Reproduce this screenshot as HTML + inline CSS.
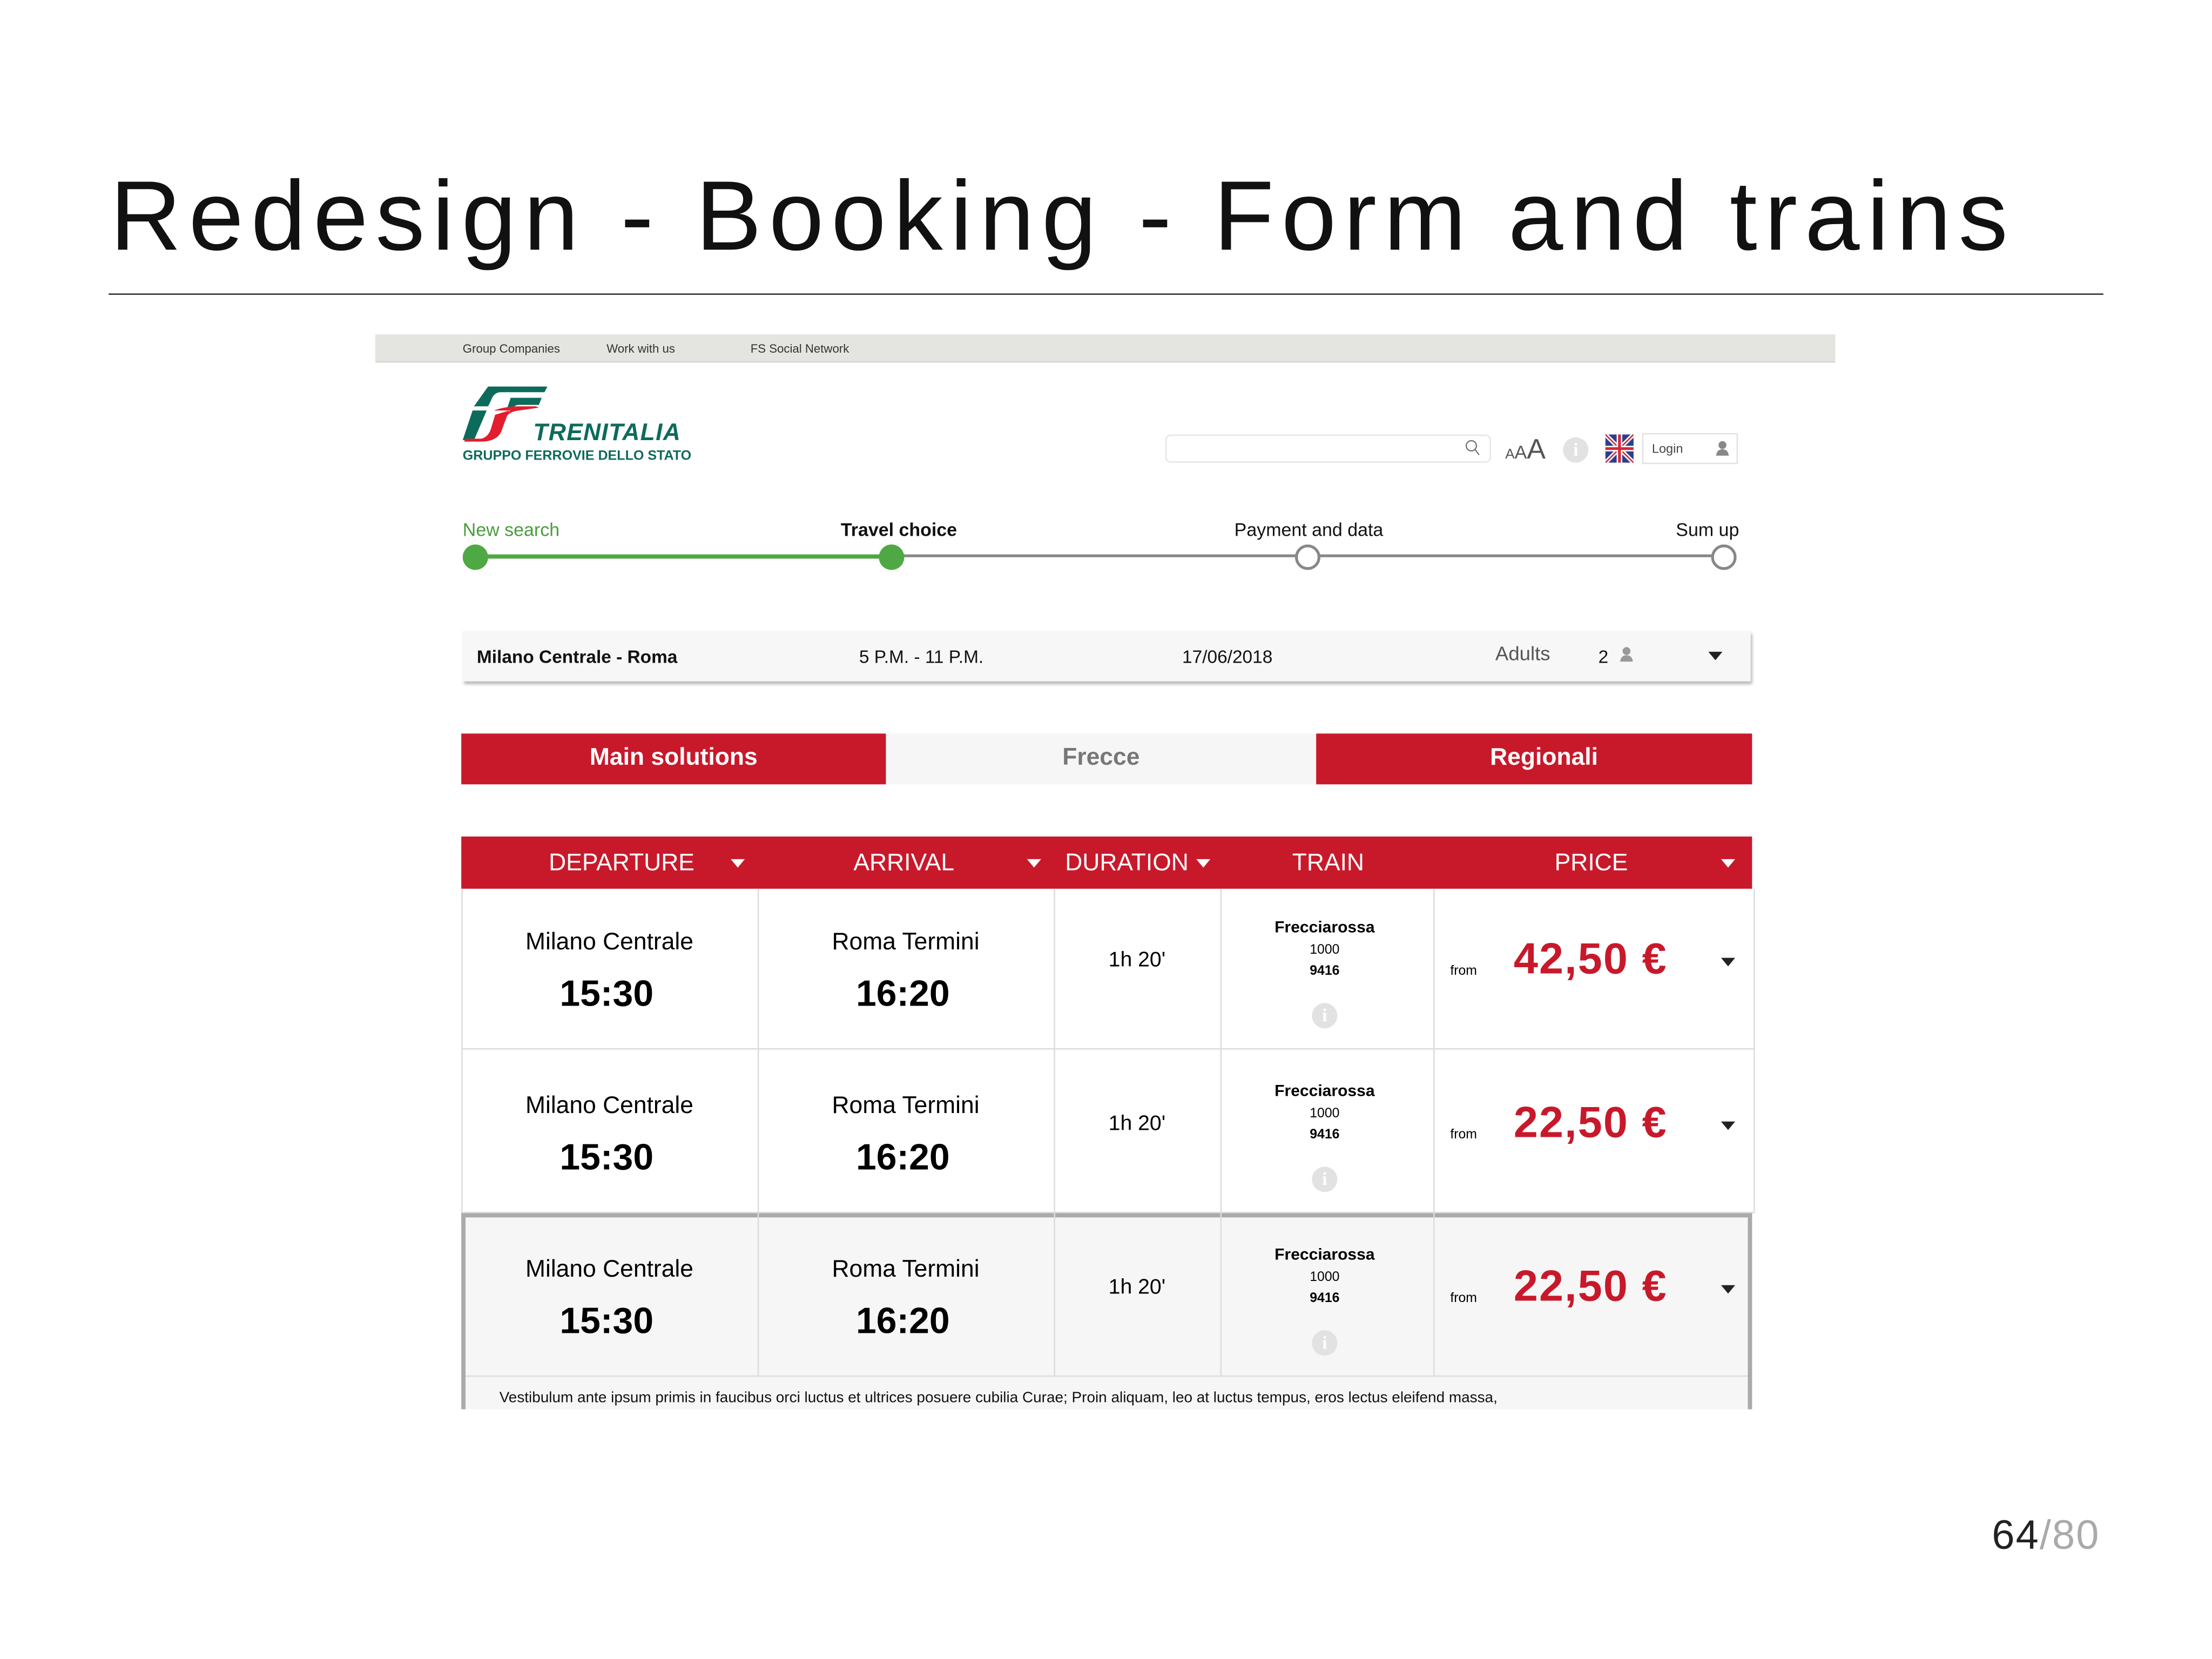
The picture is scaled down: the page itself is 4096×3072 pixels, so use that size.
<!DOCTYPE html>
<html><head><meta charset="utf-8"><style>
html,body{margin:0;padding:0;background:#fff;}
body{width:4096px;height:3072px;overflow:hidden;position:relative;font-family:"Liberation Sans",Arial,sans-serif;}
#s{position:absolute;left:0;top:0;width:1568px;height:1176px;transform:scale(2.6122);transform-origin:0 0;}
.a{position:absolute;white-space:nowrap;}
.red{background:#c8192b;}
.row{position:absolute;left:327px;width:915px;border-bottom:1px solid #ddd;}
.st{font-size:17px;position:absolute;width:210px;text-align:center;}
.tm{font-size:26px;font-weight:bold;position:absolute;width:210px;text-align:center;}
.tri{position:absolute;width:0;height:0;border-left:5px solid transparent;border-right:5px solid transparent;border-top:6px solid #222;}
.wt{border-top-color:#fff;}
.info{position:absolute;width:18px;height:18px;border-radius:50%;background:#e2e2e2;color:#fff;font-size:13px;font-weight:bold;text-align:center;line-height:18px;font-family:"Liberation Serif",serif;}
.pr{position:absolute;left:1073px;top:31px;font-size:31px;letter-spacing:0.8px;font-weight:bold;color:#c8192b;}
</style></head><body><div id="s">
<div class="a" style="left:78px;top:113px;font-size:70px;letter-spacing:5.2px;color:#111;">Redesign - Booking - Form and trains</div>
<div class="a" style="left:77px;top:208px;width:1414px;height:1px;background:#333;"></div>

<div class="a" style="left:266px;top:237px;width:1035px;height:19px;background:#e4e4e1;border-bottom:1px solid #d6d6d3;"></div>
<div class="a" style="left:328px;top:242px;font-size:8.5px;color:#333;">Group Companies</div>
<div class="a" style="left:430px;top:242px;font-size:8.5px;color:#333;">Work with us</div>
<div class="a" style="left:532px;top:242px;font-size:8.5px;color:#333;">FS Social Network</div>

<svg class="a" style="left:328px;top:272px" width="62" height="42" viewBox="0 0 62 42">
<path d="M18 2 L60 2 L58 6 L27 6 Q22 6 20 12 L18 16 L8 16 Z" fill="#0d6b5b"/>
<path d="M34 10 L56 10 L54 15 L40 15 Q36 15 35 19 L31 19 Z" fill="#0d6b5b"/>
<path d="M7 19 L17 19 L8 40 L0 40 Z" fill="#0d6b5b"/>
<path d="M22 19 L34 19 L28 22 Q24 26 22 32 Q20 38 14 39 L2 40 L1 41 L15 41 Q26 40 28 32 L31 24 Q32 20 40 19 L54 17 L52 16 L40 16 Q30 16 22 19 Z" fill="#e11d2e"/>
<path d="M23 22 L33 19 Q30 22 28 28 L25 36 Q22 41 14 41 L1 41 L2 39 L13 39 Q18 38 20 32 Z" fill="#e11d2e"/>
</svg>
<div class="a" style="left:378px;top:297px;font-size:17px;font-weight:bold;font-style:italic;color:#0d6b5b;letter-spacing:0.5px;">TRENITALIA</div>
<div class="a" style="left:328px;top:318px;font-size:9.6px;font-weight:bold;color:#0d6b5b;">GRUPPO FERROVIE DELLO STATO</div>

<div class="a" style="left:826px;top:308px;width:229px;height:18px;border:1px solid #e6e6e6;border-radius:4px;"></div>
<svg class="a" style="left:1038px;top:311px" width="12" height="13" viewBox="0 0 12 13"><circle cx="5" cy="5" r="3.6" fill="none" stroke="#666" stroke-width="0.8"/><path d="M7.6 7.6 L10.5 11.5" stroke="#666" stroke-width="0.8"/></svg>
<div class="a" style="left:1067px;top:308px;color:#555;"><span style="font-size:10px">A</span><span style="font-size:13px">A</span><span style="font-size:20px">A</span></div>
<div class="info" style="left:1108px;top:310px;">i</div>
<svg class="a" style="left:1138px;top:308px" width="20" height="20" viewBox="0 0 20 20"><rect width="20" height="20" fill="#2b3f8f"/><path d="M0 0L20 20M20 0L0 20" stroke="#fff" stroke-width="3"/><path d="M0 0L20 20M20 0L0 20" stroke="#d62839" stroke-width="1"/><path d="M10 0V20M0 10H20" stroke="#fff" stroke-width="4"/><path d="M10 0V20M0 10H20" stroke="#d62839" stroke-width="2"/></svg>
<div class="a" style="left:1164px;top:307px;width:66px;height:20px;border:1px solid #e2e2e2;"></div>
<div class="a" style="left:1171px;top:313px;font-size:9px;color:#444;">Login</div>
<svg class="a" style="left:1216px;top:312px" width="10" height="12" viewBox="0 0 10 12"><circle cx="5" cy="3.5" r="2.8" fill="#888"/><path d="M0.5 11 Q1 6.5 5 6.5 Q9 6.5 9.5 11Z" fill="#888"/></svg>

<div class="a" style="left:328px;top:368px;font-size:13px;color:#4a9d3c;">New search</div>
<div class="a" style="left:596px;top:368px;font-size:13px;font-weight:bold;color:#111;">Travel choice</div>
<div class="a" style="left:875px;top:368px;font-size:13px;color:#111;">Payment and data</div>
<div class="a" style="left:1188px;top:368px;font-size:13px;color:#111;">Sum up</div>
<div class="a" style="left:337px;top:393px;width:295px;height:3px;background:#4ea843;"></div>
<div class="a" style="left:632px;top:393px;width:590px;height:2px;background:#888;"></div>
<div class="a" style="left:328px;top:386px;width:18px;height:18px;border-radius:50%;background:#4ea843;"></div>
<div class="a" style="left:623px;top:386px;width:18px;height:18px;border-radius:50%;background:#4ea843;"></div>
<div class="a" style="left:918px;top:386px;width:14px;height:14px;border-radius:50%;background:#fff;border:2.5px solid #888;"></div>
<div class="a" style="left:1213px;top:386px;width:14px;height:14px;border-radius:50%;background:#fff;border:2.5px solid #888;"></div>

<div class="a" style="left:328px;top:447px;width:913px;height:36px;background:#f7f7f7;box-shadow:1px 2px 2px #bbb;"></div>
<div class="a" style="left:338px;top:458px;font-size:12.8px;font-weight:bold;color:#111;">Milano Centrale - Roma</div>
<div class="a" style="left:609px;top:458px;font-size:12.8px;color:#111;">5 P.M. - 11 P.M.</div>
<div class="a" style="left:838px;top:458px;font-size:12.8px;color:#111;">17/06/2018</div>
<div class="a" style="left:1060px;top:455px;font-size:14px;color:#555;">Adults</div>
<div class="a" style="left:1133px;top:458px;font-size:12.8px;color:#111;">2</div>
<svg class="a" style="left:1148px;top:458px" width="10" height="12" viewBox="0 0 10 12"><circle cx="5" cy="3.5" r="2.8" fill="#999"/><path d="M0.5 11 Q1 6.5 5 6.5 Q9 6.5 9.5 11Z" fill="#999"/></svg>
<div class="tri" style="left:1211px;top:462px;"></div>

<div class="a red" style="left:327px;top:520px;width:301px;height:36px;"></div>
<div class="a" style="left:628px;top:520px;width:305px;height:36px;background:#f6f6f6;"></div>
<div class="a red" style="left:933px;top:520px;width:309px;height:36px;"></div>
<div class="a" style="left:327px;top:527px;width:301px;text-align:center;font-size:17px;font-weight:bold;color:#fff;">Main solutions</div>
<div class="a" style="left:628px;top:527px;width:305px;text-align:center;font-size:17px;font-weight:bold;color:#777;">Frecce</div>
<div class="a" style="left:947px;top:527px;width:295px;text-align:center;font-size:17px;font-weight:bold;color:#fff;">Regionali</div>

<div class="a red" style="left:327px;top:593px;width:915px;height:37px;"></div>
<div class="a" style="left:389px;top:602px;font-size:17px;color:#fff;">DEPARTURE</div>
<div class="tri wt" style="left:518px;top:609px;"></div>
<div class="a" style="left:605px;top:602px;font-size:17px;color:#fff;">ARRIVAL</div>
<div class="tri wt" style="left:728px;top:609px;"></div>
<div class="a" style="left:755px;top:602px;font-size:17px;color:#fff;">DURATION</div>
<div class="tri wt" style="left:848px;top:609px;"></div>
<div class="a" style="left:916px;top:602px;font-size:17px;color:#fff;">TRAIN</div>
<div class="a" style="left:1102px;top:602px;font-size:17px;color:#fff;">PRICE</div>
<div class="tri wt" style="left:1220px;top:609px;"></div>

<div class="row" style="top:630px;height:113px;border-left:1px solid #ddd;border-right:1px solid #ddd;"></div>
<div class="row" style="top:744px;height:115px;border-left:1px solid #ddd;border-right:1px solid #ddd;"></div>
<div class="a" style="left:327px;top:860px;width:909px;height:136px;border:3px solid #aaa;border-bottom:none;background:#f6f6f6;"></div>
<div class="a" style="left:330px;top:975px;width:909px;height:1px;background:#ddd;"></div>
<div class="a" style="left:354px;top:985px;font-size:10.7px;color:#111;">Vestibulum ante ipsum primis in faucibus orci luctus et ultrices posuere cubilia Curae; Proin aliquam, leo at luctus tempus, eros lectus eleifend massa,</div>
<div class="a" style="left:537px;top:630px;width:1px;height:345px;background:#ddd;"></div>
<div class="a" style="left:747px;top:630px;width:1px;height:345px;background:#ddd;"></div>
<div class="a" style="left:865px;top:630px;width:1px;height:345px;background:#ddd;"></div>
<div class="a" style="left:1016px;top:630px;width:1px;height:345px;background:#ddd;"></div>

<div class="a" style="left:0;top:631px;">
 <div class="st" style="left:327px;top:27px;">Milano Centrale</div>
 <div class="tm" style="left:325px;top:58px;">15:30</div>
 <div class="st" style="left:537px;top:27px;">Roma Termini</div>
 <div class="tm" style="left:535px;top:58px;">16:20</div>
 <div class="st" style="left:701px;top:41px;font-size:15px;">1h 20'</div>
 <div class="a" style="left:866px;top:21px;width:146px;text-align:center;font-size:11.5px;font-weight:bold;">Frecciarossa</div>
 <div class="a" style="left:866px;top:37px;width:146px;text-align:center;font-size:9.5px;">1000</div>
 <div class="a" style="left:866px;top:52px;width:146px;text-align:center;font-size:9.5px;font-weight:bold;">9416</div>
 <div class="info" style="left:930px;top:80px;">i</div>
 <div class="a" style="left:1028px;top:52px;font-size:9.5px;">from</div>
 <div class="pr">42,50 €</div>
 <div class="tri" style="left:1220px;top:48px;"></div>
</div>
<div class="a" style="left:0;top:747px;">
 <div class="st" style="left:327px;top:27px;">Milano Centrale</div>
 <div class="tm" style="left:325px;top:58px;">15:30</div>
 <div class="st" style="left:537px;top:27px;">Roma Termini</div>
 <div class="tm" style="left:535px;top:58px;">16:20</div>
 <div class="st" style="left:701px;top:41px;font-size:15px;">1h 20'</div>
 <div class="a" style="left:866px;top:21px;width:146px;text-align:center;font-size:11.5px;font-weight:bold;">Frecciarossa</div>
 <div class="a" style="left:866px;top:37px;width:146px;text-align:center;font-size:9.5px;">1000</div>
 <div class="a" style="left:866px;top:52px;width:146px;text-align:center;font-size:9.5px;font-weight:bold;">9416</div>
 <div class="info" style="left:930px;top:80px;">i</div>
 <div class="a" style="left:1028px;top:52px;font-size:9.5px;">from</div>
 <div class="pr">22,50 €</div>
 <div class="tri" style="left:1220px;top:48px;"></div>
</div>
<div class="a" style="left:0;top:863px;">
 <div class="st" style="left:327px;top:27px;">Milano Centrale</div>
 <div class="tm" style="left:325px;top:58px;">15:30</div>
 <div class="st" style="left:537px;top:27px;">Roma Termini</div>
 <div class="tm" style="left:535px;top:58px;">16:20</div>
 <div class="st" style="left:701px;top:41px;font-size:15px;">1h 20'</div>
 <div class="a" style="left:866px;top:21px;width:146px;text-align:center;font-size:11.5px;font-weight:bold;">Frecciarossa</div>
 <div class="a" style="left:866px;top:37px;width:146px;text-align:center;font-size:9.5px;">1000</div>
 <div class="a" style="left:866px;top:52px;width:146px;text-align:center;font-size:9.5px;font-weight:bold;">9416</div>
 <div class="info" style="left:930px;top:80px;">i</div>
 <div class="a" style="left:1028px;top:52px;font-size:9.5px;">from</div>
 <div class="pr">22,50 €</div>
 <div class="tri" style="left:1220px;top:48px;"></div>
</div>

<div class="a" style="left:1412px;top:1073px;font-size:29px;letter-spacing:0.8px;color:#222;">64<span style="color:#aaa">/80</span></div>
</div></body></html>
